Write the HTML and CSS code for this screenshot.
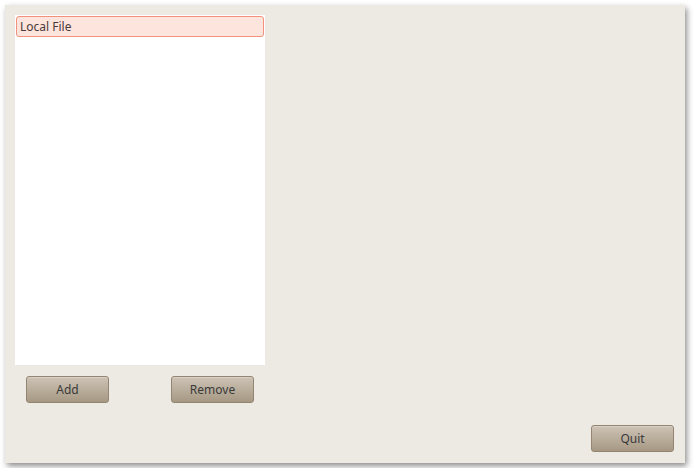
FILE: index.html
```html
<!DOCTYPE html>
<html lang="en">
<head>
    <meta charset="UTF-8">
    <title>Sources</title>
    <link rel="stylesheet" href="styles.css">
</head>
<body>
    <div class="window">
        <div class="main">
            <div class="left">
                <div class="list">
                    <div class="item selected">Local File</div>
                </div>
                <div class="list-buttons">
                    <button class="btn">Add</button>
                    <button class="btn">Remove</button>
                </div>
            </div>
        </div>
        <div class="footer">
            <button class="btn">Quit</button>
        </div>
    </div>
</body>
</html>
```

FILE: styles.css
```css
body {
    margin: 0;
    background: #ffffff;
    font-family: "Noto Sans", "DejaVu Sans", sans-serif;
    font-size: 12px;
    color: #3c3c3c;
}

.window {
    margin: 5px;
    width: 680px;
    height: 458px;
    box-sizing: border-box;
    padding: 10px;
    background: #edeae3;
    box-shadow: 2px 3px 6px rgba(0, 0, 0, 0.45);
    display: flex;
    flex-direction: column;
}

.main {
    display: flex;
}

.left {
    width: 250px;
}

.list {
    height: 350px;
    background: #ffffff;
    padding: 1px;
    box-sizing: border-box;
}

.item {
    height: 21px;
    line-height: 19px;
    padding: 0 3px;
    box-sizing: border-box;
}

.item.selected {
    background: #fde4dd;
    border: 1px solid #f3927c;
    border-radius: 3px;
    color: #4a3a38;
}

.list-buttons {
    display: flex;
    justify-content: space-between;
    padding: 11px 11px 0;
}

.btn {
    width: 83px;
    height: 27px;
    font-family: inherit;
    font-size: 12px;
    color: #3a3a3a;
    background: linear-gradient(#cdc3b5, #a69883);
    border: 1px solid #938571;
    border-radius: 3px;
    box-shadow: inset 0 1px 0 rgba(255, 255, 255, 0.25);
    padding: 0;
}

.footer {
    margin-top: auto;
    display: flex;
    justify-content: flex-end;
    padding: 0 1px 1px 0;
}
```
